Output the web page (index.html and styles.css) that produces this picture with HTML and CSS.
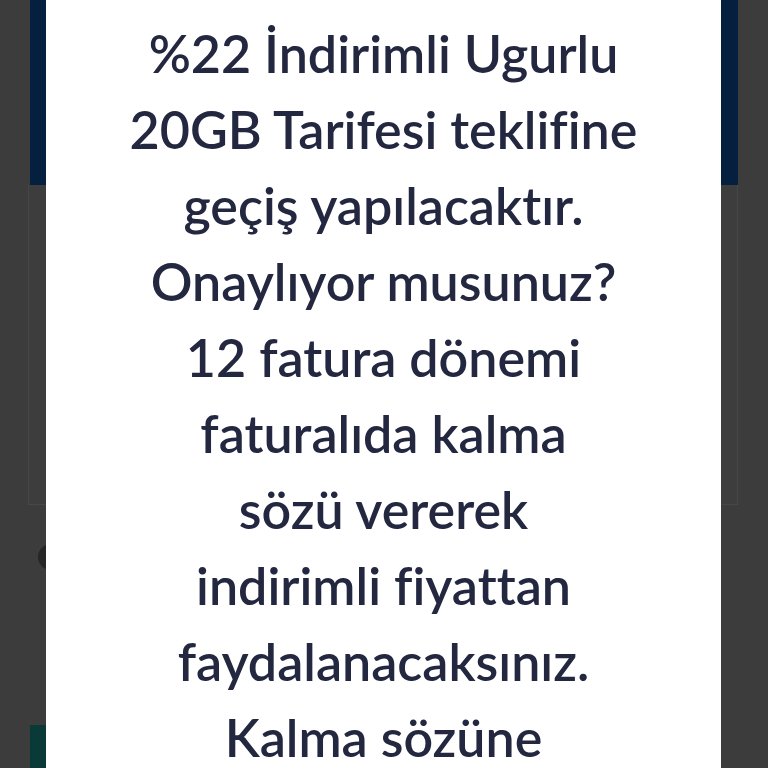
FILE: index.html
```html
<!DOCTYPE html>
<html lang="tr">
<head>
  <meta charset="UTF-8" />
  <meta name="viewport" content="width=device-width, initial-scale=1.0" />
  <title>Tarife Değişikliği</title>
  <link rel="stylesheet" href="styles.css">
</head>
<body>
  <div class="page">
    <header class="top"></header>
    <section class="card"></section>
    <div class="row"><span class="dot"></span></div>
    <div class="cta"></div>
  </div>

  <div class="modal">
    <div class="modal-content">
      <p class="msg">%22 İndirimli Ugurlu<br>20GB Tarifesi teklifine<br>geçiş yapılacaktır.<br>Onaylıyor musunuz?<br>12 fatura dönemi<br>faturalıda kalma<br>sözü vererek<br>indirimli fiyattan<br>faydalanacaksınız.<br>Kalma sözüne</p>
    </div>
  </div>
</body>
</html>
```

FILE: styles.css
```css
* { box-sizing: border-box; }
html, body {
  margin: 0; padding: 0; height: 100%;
  font-family: Lato, "Noto Sans", Arial, sans-serif;
  background: #3c3c3c;
  overflow: hidden;
}
.page { padding: 0 30px; display: flex; flex-direction: column; }
.top { height: 185px; background: #05203f; }
.card {
  height: 320px; margin-left: -2px;
  border: 1px solid #474747; border-top: none;
  background: #3d3d3d;
}
.row { height: 220px; display: flex; align-items: center; padding-left: 8px; }
.dot { width: 26px; height: 26px; border-radius: 50%; background: #262626; margin-top: -116px; }
.cta { height: 60px; width: 200px; background: #0a3a38; }
.modal {
  position: fixed; top: 0; left: 0; right: 0; bottom: 0;
  display: flex; justify-content: center;
}
.modal-content {
  width: 675px; margin-left: -1px; background: #fff;
  padding-top: 15px; height: 100%;
}
.msg {
  margin: 0; text-align: center;
  font-size: 52px; line-height: 76px; font-weight: 600;
  font-variant-ligatures: none;
  color: #232840;
}
```
